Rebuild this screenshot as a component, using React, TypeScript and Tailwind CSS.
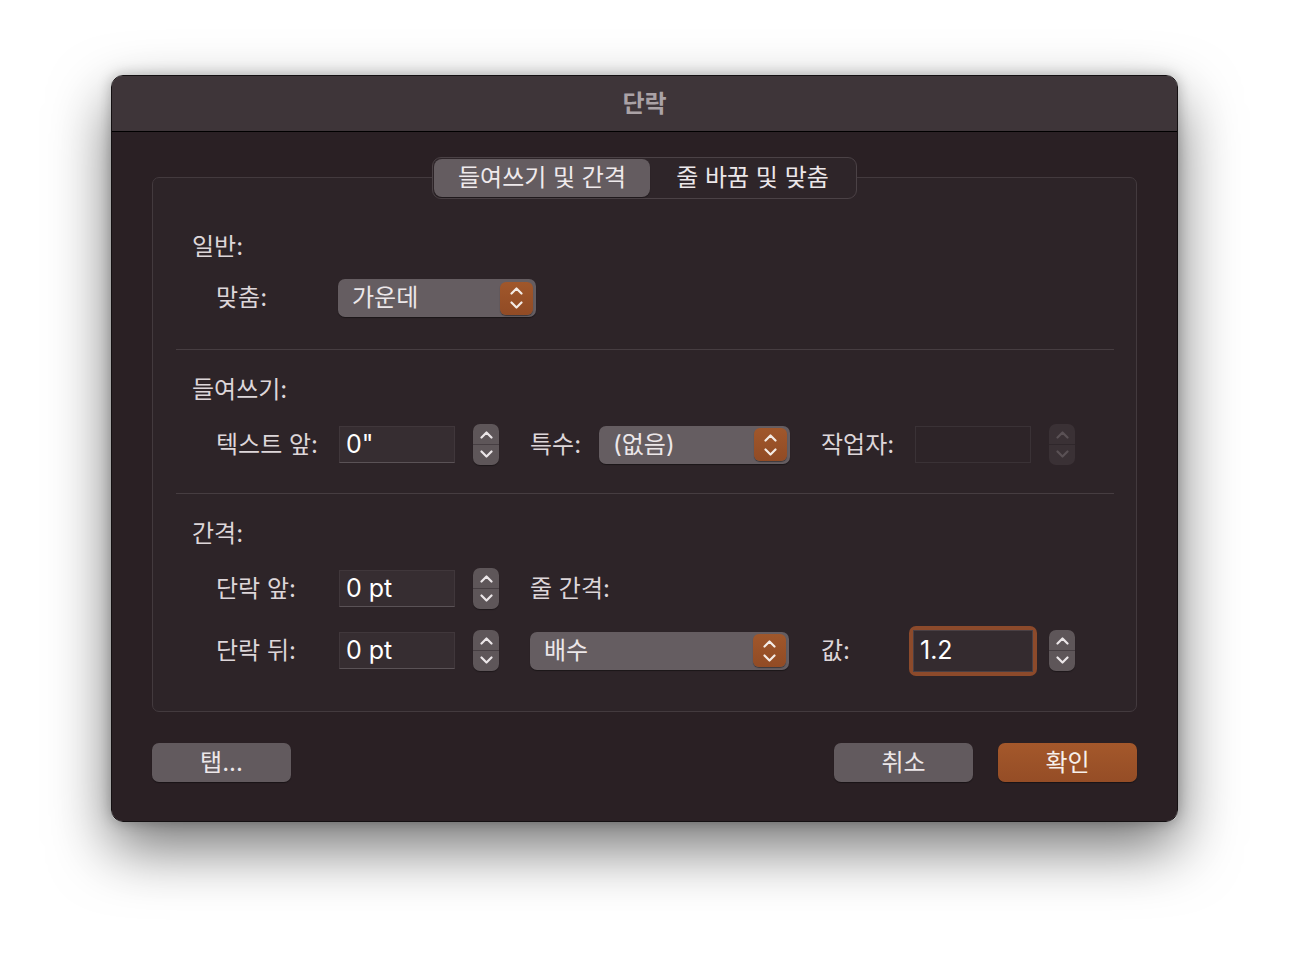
import React from 'react';

const FONT = 'Inter, "Noto Sans CJK KR", sans-serif';

function Chevron({ dir, color = '#e9e4e6' }: { dir: 'up' | 'down'; color?: string }) {
  return (
    <svg width="13" height="8" viewBox="0 0 13 8" fill="none">
      <path
        d={dir === 'up' ? 'M1.5 6.5 L6.5 1.5 L11.5 6.5' : 'M1.5 1.5 L6.5 6.5 L11.5 1.5'}
        stroke={color}
        strokeWidth="2.2"
        strokeLinecap="round"
        strokeLinejoin="round"
      />
    </svg>
  );
}

function Stepper({ disabled = false }: { disabled?: boolean }) {
  const c = disabled ? '#5a5155' : '#ebe6e8';
  return (
    <div
      className={`flex h-[41px] w-[26px] flex-col overflow-hidden rounded-[7px] ${
        disabled ? 'bg-[#3a3135]' : 'bg-[#5e5659] shadow-[0_1px_1px_rgba(0,0,0,0.35)]'
      }`}
    >
      <div className="flex flex-1 items-center justify-center pt-[2px]">
        <Chevron dir="up" color={c} />
      </div>
      <div className={`h-px ${disabled ? 'bg-[#2f272b]' : 'bg-[#463e42]'}`} />
      <div className="flex flex-1 items-center justify-center pb-[2px]">
        <Chevron dir="down" color={c} />
      </div>
    </div>
  );
}

function Field({ value, disabled = false }: { value?: string; disabled?: boolean }) {
  return (
    <div
      className={`flex h-[37px] w-[116px] items-center border pl-[6px] text-[25px] text-white ${
        disabled
          ? 'border-[#3a3236] bg-[#2d2428]'
          : 'border-[#40373b] border-b-[#5a5256] bg-[#362d31]'
      }`}
    >
      {value}
    </div>
  );
}

function Popup({ label, width }: { label: string; width: string }) {
  return (
    <div
      className={`flex h-[38px] ${width} items-center justify-between rounded-[7px] bg-[#655d61] pl-[14px] pr-[3px] shadow-[0_1px_1px_rgba(0,0,0,0.4)]`}
    >
      <span className="text-[24px] text-[#ece7e9]">{label}</span>
      <div className="flex h-[33px] w-[33px] flex-col items-center justify-center gap-[6px] rounded-[6px] bg-gradient-to-b from-[#a0572b] to-[#914b25] shadow-[0_1px_1px_rgba(0,0,0,0.4)]">
        <Chevron dir="up" color="#f3ebe6" />
        <Chevron dir="down" color="#f3ebe6" />
      </div>
    </div>
  );
}

function Label({ text, width }: { text: string; width: string }) {
  return <div className={`${width} shrink-0 text-[24px] text-[#ddd6d9]`}>{text}</div>;
}

export default function App() {
  return (
    <div className="min-h-[970px] w-full bg-white pl-[111px] pt-[75px]" style={{ fontFamily: FONT }}>
      <div className="flex h-[747px] w-[1067px] flex-col overflow-hidden rounded-[12px] border border-[#141012] shadow-[0_26px_60px_rgba(0,0,0,0.55),0_0_14px_rgba(0,0,0,0.25),inset_0_0_0_1px_#5b5256]">
        {/* title bar */}
        <div className="flex h-[56px] shrink-0 items-center justify-center border-b border-black bg-[#3e3539]">
          <span className="text-[24px] font-bold text-[#aaa2a6]">단락</span>
        </div>

        {/* body */}
        <div className="flex flex-1 flex-col bg-[#2a2024] px-[40px] pt-[45px]">
          <div className="flex h-[535px] flex-col rounded-[7px] border border-[#433a3e] bg-[#2d2428]">
            {/* tabs */}
            <div className="-mt-[21px] flex justify-center">
              <div className="flex h-[42px] w-[425px] rounded-[9px] border border-[#4b4246] bg-[#2e2529] p-[1px] text-[24px]">
                <div className="flex w-[216px] items-center justify-center rounded-[8px] bg-[#645c60] text-[#efeaec] shadow-[0_1px_1px_rgba(0,0,0,0.35)]">
                  들여쓰기 및 간격
                </div>
                <div className="flex flex-1 items-center justify-center text-[#ece7e9]">줄 바꿈 및 맞춤</div>
              </div>
            </div>

            {/* general */}
            <div className="mt-[33px] flex h-[30px] items-center pl-[39px] text-[24px] text-[#ddd6d9]">일반:</div>
            <div className="mt-[17px] flex h-[38px] items-center pl-[63px]">
              <Label text="맞춤:" width="w-[122px]" />
              <Popup label="가운데" width="w-[198px]" />
            </div>

            <div className="ml-[23px] mr-[22px] mt-[32px] h-px bg-[#463d41]" />

            {/* indent */}
            <div className="mt-[25px] flex h-[30px] items-center pl-[39px] text-[24px] text-[#ddd6d9]">들여쓰기:</div>
            <div className="mt-[19px] flex h-[41px] items-center pl-[63px]">
              <Label text="텍스트 앞:" width="w-[123px]" />
              <Field value={'0"'} />
              <div className="ml-[18px]">
                <Stepper />
              </div>
              <div className="ml-[31px]">
                <Label text="특수:" width="w-[69px]" />
              </div>
              <Popup label="(없음)" width="w-[191px]" />
              <div className="ml-[31px]">
                <Label text="작업자:" width="w-[94px]" />
              </div>
              <Field disabled />
              <div className="ml-[18px]">
                <Stepper disabled />
              </div>
            </div>

            <div className="ml-[23px] mr-[22px] mt-[28px] h-px bg-[#463d41]" />

            {/* spacing */}
            <div className="mt-[25px] flex h-[30px] items-center pl-[39px] text-[24px] text-[#ddd6d9]">간격:</div>
            <div className="mt-[19px] flex h-[41px] items-center pl-[63px]">
              <Label text="단락 앞:" width="w-[123px]" />
              <Field value="0 pt" />
              <div className="ml-[18px]">
                <Stepper />
              </div>
              <div className="ml-[31px]">
                <Label text="줄 간격:" width="w-[120px]" />
              </div>
            </div>
            <div className="mt-[21px] flex h-[41px] items-center pl-[63px]">
              <Label text="단락 뒤:" width="w-[123px]" />
              <Field value="0 pt" />
              <div className="ml-[18px]">
                <Stepper />
              </div>
              <div className="ml-[31px]">
                <Popup label="배수" width="w-[259px]" />
              </div>
              <div className="ml-[32px]">
                <Label text="값:" width="w-[88px]" />
              </div>
              <div className="h-[50px] w-[128px] rounded-[7px] bg-[#8c4a2b] p-[4px]">
                <div className="flex h-full w-full items-center border border-[#4a4044] bg-[#342b2f] pl-[6px] text-[25px] text-white">
                  1.2
                </div>
              </div>
              <div className="ml-[12px]">
                <Stepper />
              </div>
            </div>
          </div>

          {/* buttons */}
          <div className="mt-[31px] flex items-center justify-between text-[24px]">
            <button className="h-[39px] w-[139px] rounded-[7px] bg-[#625a5e] text-[#ece7e9] shadow-[0_1px_1px_rgba(0,0,0,0.4)]">
              탭...
            </button>
            <div className="flex gap-[25px]">
              <button className="h-[39px] w-[139px] rounded-[7px] bg-[#625a5e] text-[#ece7e9] shadow-[0_1px_1px_rgba(0,0,0,0.4)]">
                취소
              </button>
              <button className="h-[39px] w-[139px] rounded-[7px] bg-gradient-to-b from-[#a4582b] to-[#954d26] text-[#f6efeb] shadow-[0_1px_1px_rgba(0,0,0,0.4)]">
                확인
              </button>
            </div>
          </div>
        </div>
      </div>
    </div>
  );
}
